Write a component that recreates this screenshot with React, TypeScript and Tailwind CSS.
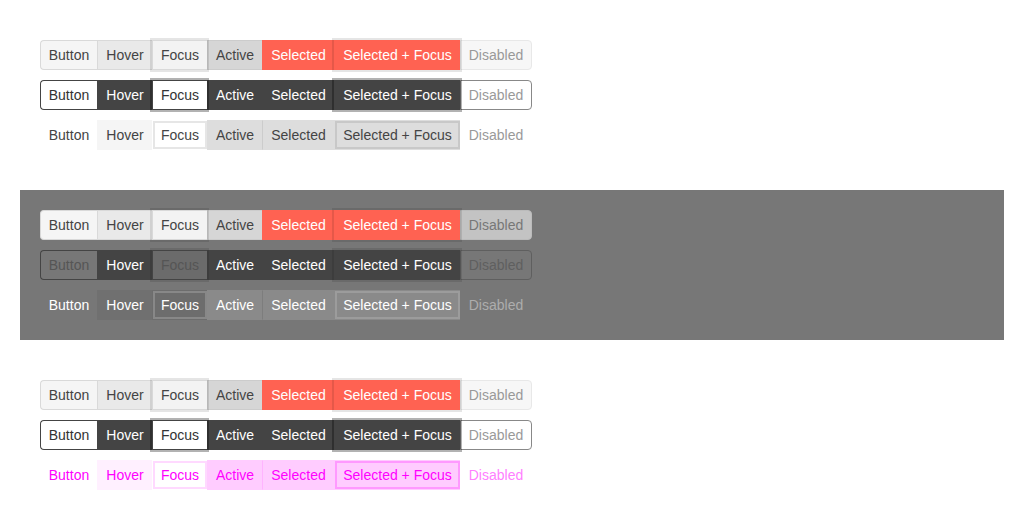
const LABELS = ["Button", "Hover", "Focus", "Active", "Selected", "Selected + Focus", "Disabled"];
const WIDTHS = ["w-[57px]", "w-[55px]", "w-[55px]", "w-[55px]", "w-[72px]", "w-[126px]", "w-[72px]"];

type Row = string[];

// default (light) row, shared by sections 1 and 3
const solidRow: Row = [
  "bg-[#f5f5f5] text-[#444] border-[#d9d9d9]",
  "bg-[#e9e9e9] text-[#444] border-[#d9d9d9]",
  "bg-[#f3f3f3] text-[#444] border-[#d9d9d9] ring-2 ring-black/10",
  "bg-[#d6d6d6] text-[#444] border-[#cccccc]",
  "bg-[#ff6252] text-white border-[#ff6252]",
  "bg-[#ff6252] text-white border-[#ff6252] ring-2 ring-black/10",
  "bg-[#f7f7f7] text-[#999] border-[#e8e8e8]",
];

const outlineRow: Row = [
  "bg-white text-[#333] border-[#444]",
  "bg-[#444] text-white border-[#444]",
  "bg-white text-[#333] border-[#444] ring-2 ring-black/30",
  "bg-[#444] text-white border-[#444]",
  "bg-[#444] text-white border-[#444]",
  "bg-[#444] text-white border-[#444] ring-2 ring-black/30",
  "bg-white text-[#999] border-[#888]",
];

const flatRow: Row = [
  "text-[#444] border-transparent",
  "bg-[#f5f5f5] text-[#444] border-transparent",
  "bg-white text-[#444] border-transparent inset-ring-2 inset-ring-[#e6e6e6]",
  "bg-[#dddddd] text-[#444] border-transparent",
  "bg-[#dddddd] text-[#444] border-l-[#cccccc] border-y-transparent",
  "bg-[#dddddd] text-[#444] border-transparent inset-ring-2 inset-ring-[#c8c8c8]",
  "text-[#999] border-transparent",
];

const darkSolidRow: Row = [
  "bg-[#f5f5f5] text-[#444] border-[#d9d9d9]",
  "bg-[#e9e9e9] text-[#444] border-[#d9d9d9]",
  "bg-[#f3f3f3] text-[#444] border-[#d9d9d9] ring-2 ring-black/10",
  "bg-[#d6d6d6] text-[#444] border-[#cccccc]",
  "bg-[#ff6252] text-white border-[#ff6252]",
  "bg-[#ff6252] text-white border-[#ff6252] ring-2 ring-black/10",
  "bg-[#c3c3c3] text-[#777] border-[#bbbbbb]",
];

const darkOutlineRow: Row = [
  "text-[#555] border-[#444]",
  "bg-[#444] text-white border-[#444]",
  "bg-[#6b6b6b] text-[#555] border-[#444] ring-2 ring-black/10",
  "bg-[#444] text-white border-[#444]",
  "bg-[#444] text-white border-[#444]",
  "bg-[#444] text-white border-[#444] ring-2 ring-black/10",
  "text-[#5f5f5f] border-[#5f5f5f]",
];

const darkFlatRow: Row = [
  "text-white border-transparent",
  "bg-[#707070] text-white border-transparent",
  "bg-[#6d6d6d] text-white border-transparent inset-ring-2 inset-ring-[#888]",
  "bg-[#8a8a8a] text-white border-transparent",
  "bg-[#8a8a8a] text-white border-l-[#7d7d7d] border-y-transparent",
  "bg-[#8a8a8a] text-white border-transparent inset-ring-2 inset-ring-[#9c9c9c]",
  "text-[#adadad] border-transparent",
];

const pinkFlatRow: Row = [
  "text-[#ff00ff] border-transparent",
  "bg-[#fff0ff] text-[#ff00ff] border-transparent",
  "bg-white text-[#ff00ff] border-transparent inset-ring-2 inset-ring-[#ffd9ff]",
  "bg-[#ffccff] text-[#ff00ff] border-transparent",
  "bg-[#ffccff] text-[#ff00ff] border-l-[#ffb3ff] border-y-transparent",
  "bg-[#ffccff] text-[#ff00ff] border-transparent inset-ring-2 inset-ring-[#ff99ff]",
  "text-[#ff80ff] border-transparent",
];

function ButtonGroup({ row }: { row: Row }) {
  return (
    <div className="flex h-[30px]">
      {LABELS.map((label, i) => (
        <div
          key={label}
          className={`relative flex items-center justify-center border-y ${i > 0 ? "border-l" : "border-l rounded-l-[4px]"} ${
            i === LABELS.length - 1 ? "border-r rounded-r-[4px]" : ""
          } ${i === 2 || i === 5 ? "z-10" : ""} ${WIDTHS[i]} ${row[i]}`}
        >
          {label}
        </div>
      ))}
    </div>
  );
}

function Section({ rows, dark }: { rows: Row[]; dark?: boolean }) {
  return (
    <div className={`flex flex-col gap-[10px] p-5 ${dark ? "bg-[#777]" : ""}`}>
      {rows.map((row, i) => (
        <ButtonGroup key={i} row={row} />
      ))}
    </div>
  );
}

export default function App() {
  return (
    <div className="flex h-[530px] w-[1024px] flex-col gap-5 bg-white p-5 font-['Liberation_Sans',Arial,sans-serif] text-[14px]">
      <Section rows={[solidRow, outlineRow, flatRow]} />
      <Section rows={[darkSolidRow, darkOutlineRow, darkFlatRow]} dark />
      <Section rows={[solidRow, outlineRow, pinkFlatRow]} />
    </div>
  );
}
